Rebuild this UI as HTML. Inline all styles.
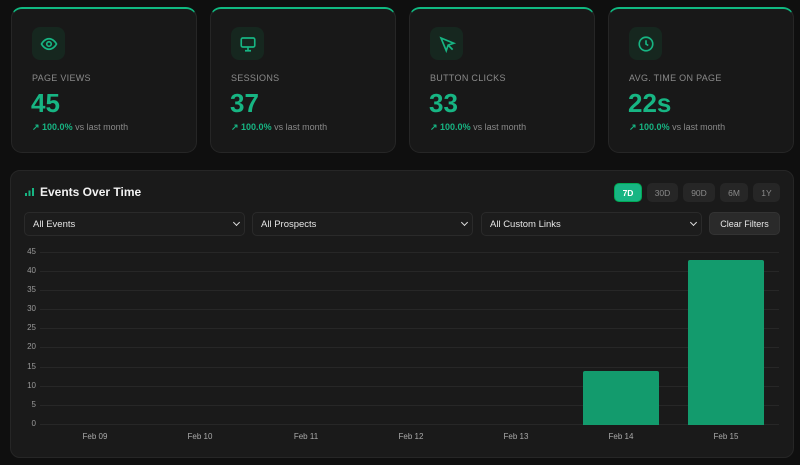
<!DOCTYPE html>
<html><head><style>
*{margin:0;padding:0;box-sizing:border-box}
body{width:800px;height:465px;background:#0f0f0f;font-family:"Liberation Sans",sans-serif;position:relative;overflow:hidden}
.card{position:absolute;top:7px;width:186px;height:146px;background:#181818;border:1px solid #262626;border-radius:11px;border-top:2px solid #10b981;overflow:hidden}
.ic{position:absolute;left:20px;top:18px;width:33px;height:33px;border-radius:8px;background:#16271f;display:flex;align-items:center;justify-content:center}
.lbl{position:absolute;left:20px;top:64px;font-size:9px;color:#8a8a8a;letter-spacing:.3px}
.num{position:absolute;left:19px;top:79px;font-size:26px;font-weight:bold;color:#17b583}
.chg{position:absolute;left:20px;top:113px;font-size:9px;color:#8a8a8a}
.chg b{color:#17b583}
.panel{position:absolute;left:10px;top:170px;width:784px;height:288px;background:#1a1a1a;border:1px solid #262626;border-radius:10px}
.btn{position:absolute;top:183px;height:19px;border-radius:5px;background:#262626;color:#8a8a8a;font-size:8.5px;display:flex;align-items:center;justify-content:center}
.sel{position:absolute;top:212px;height:24px;background:#1c1c1c;border:1px solid #2a2a2a;border-radius:5px;color:#e5e5e5;font-size:9.5px;padding-left:8px;line-height:23px}
.sel:after{content:"";position:absolute;right:5px;top:7px;width:4px;height:4px;border-right:1.5px solid #ddd;border-bottom:1.5px solid #ddd;transform:rotate(45deg)}
.g{position:absolute;left:40px;width:739px;height:1px;background:#272727}
.y{position:absolute;left:18px;width:18px;text-align:right;font-size:8px;color:#999}
.x{position:absolute;top:432px;width:60px;text-align:center;font-size:8px;color:#aaa}
.bar{position:absolute;background:#139b6d;border-radius:2px 2px 0 0}
</style></head><body>
<div class="card" style="left:11px"><div class="ic"><svg width="18" height="18" viewBox="0 0 24 24" fill="none" stroke="#17b583" stroke-width="2.2"><path d="M2 12s3.5-7 10-7 10 7 10 7-3.5 7-10 7S2 12 2 12z"/><circle cx="12" cy="12" r="3"/></svg></div><div class="lbl">PAGE VIEWS</div><div class="num">45</div><div class="chg"><b>↗ 100.0%</b> vs last month</div></div>
<div class="card" style="left:210px"><div class="ic"><svg width="18" height="18" viewBox="0 0 24 24" fill="none" stroke="#17b583" stroke-width="2.2"><rect x="3" y="4" width="18" height="12" rx="2"/><path d="M8 21h8M12 16v5"/></svg></div><div class="lbl">SESSIONS</div><div class="num">37</div><div class="chg"><b>↗ 100.0%</b> vs last month</div></div>
<div class="card" style="left:409px"><div class="ic"><svg width="18" height="18" viewBox="0 0 24 24" fill="none" stroke="#17b583" stroke-width="2.2"><path d="M4 4l7 17 2.5-7.5L21 11z"/><path d="M13.5 13.5l6 6"/></svg></div><div class="lbl">BUTTON CLICKS</div><div class="num">33</div><div class="chg"><b>↗ 100.0%</b> vs last month</div></div>
<div class="card" style="left:608px"><div class="ic"><svg width="18" height="18" viewBox="0 0 24 24" fill="none" stroke="#17b583" stroke-width="2.2"><circle cx="12" cy="12" r="9"/><path d="M12 7v5l3 2"/></svg></div><div class="lbl">AVG. TIME ON PAGE</div><div class="num">22s</div><div class="chg"><b>↗ 100.0%</b> vs last month</div></div>
<div class="panel"></div>
<svg style="position:absolute;left:25px;top:187px" width="10" height="10"><rect x="0" y="6" width="2" height="3" fill="#17b583"/><rect x="3.5" y="3.5" width="2" height="5.5" fill="#17b583"/><rect x="7" y="1" width="2" height="8" fill="#17b583"/></svg>
<div style="position:absolute;left:40px;top:185px;font-size:12px;font-weight:bold;color:#f2f2f2">Events Over Time</div>
<div class="btn" style="left:614px;width:28px;background:#17b583;color:#fff;border:1px solid #0a5;font-weight:bold">7D</div>
<div class="btn" style="left:647px;width:31px">30D</div>
<div class="btn" style="left:683px;width:32px">90D</div>
<div class="btn" style="left:720px;width:28px">6M</div>
<div class="btn" style="left:753px;width:27px">1Y</div>
<div class="sel" style="left:24px;width:221px">All Events</div>
<div class="sel" style="left:252px;width:221px">All Prospects</div>
<div class="sel" style="left:481px;width:221px">All Custom Links</div>
<div class="btn" style="left:709px;top:212px;width:71px;height:23px;color:#e5e5e5;background:#2a2a2a;border:1px solid #333;font-size:9px">Clear Filters</div>
<div class="g" style="top:252px"></div><div class="g" style="top:271px"></div><div class="g" style="top:290px"></div><div class="g" style="top:309px"></div><div class="g" style="top:328px"></div><div class="g" style="top:347px"></div><div class="g" style="top:367px"></div><div class="g" style="top:386px"></div><div class="g" style="top:405px"></div><div class="g" style="top:424px"></div>
<div class="y" style="top:247px">45</div><div class="y" style="top:266px">40</div><div class="y" style="top:285px">35</div><div class="y" style="top:304px">30</div><div class="y" style="top:323px">25</div><div class="y" style="top:342px">20</div><div class="y" style="top:362px">15</div><div class="y" style="top:381px">10</div><div class="y" style="top:400px">5</div><div class="y" style="top:419px">0</div>
<div class="bar" style="left:583px;top:371px;width:76px;height:54px"></div>
<div class="bar" style="left:688px;top:260px;width:76px;height:165px"></div>
<div class="x" style="left:65px">Feb 09</div><div class="x" style="left:170px">Feb 10</div><div class="x" style="left:276px">Feb 11</div><div class="x" style="left:381px">Feb 12</div><div class="x" style="left:486px">Feb 13</div><div class="x" style="left:591px">Feb 14</div><div class="x" style="left:696px">Feb 15</div>
</body></html>
